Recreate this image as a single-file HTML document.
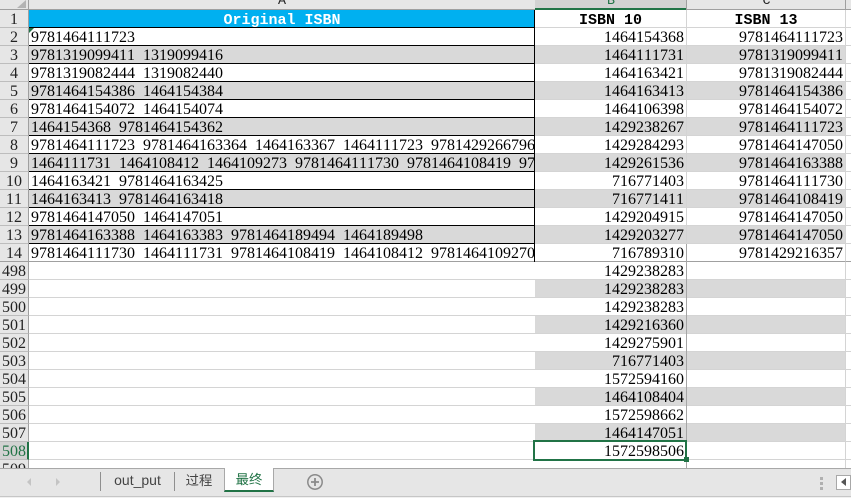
<!DOCTYPE html>
<html><head><meta charset="utf-8">
<style>
html,body{margin:0;padding:0;background:#fff;}
#s{position:relative;width:851px;height:498px;overflow:hidden;background:#fff;font-family:"Liberation Serif","Noto Sans CJK SC",serif;font-size:16px;color:#000;font-kerning:none;font-feature-settings:"kern" 0;text-rendering:optimizeSpeed;}
#s div{position:absolute;box-sizing:border-box;}
.h{left:0;width:29px;height:18px;background:#e6e6e6;border-right:1px solid #9f9f9f;border-bottom:1px solid #bdbdbd;text-align:right;padding-right:2px;line-height:20px;color:#222;overflow:hidden;}
.h.c{text-align:center;padding-right:0;}
.a{left:29px;width:506px;height:18px;line-height:20px;padding-left:2px;white-space:pre;word-spacing:4px;overflow:hidden;border-bottom:1px solid #000;border-right:1px solid #000;}
.b{left:535px;width:152px;height:18px;line-height:20px;text-align:right;padding-right:2px;border-bottom:1px solid #d4d4d4;border-right:1px solid #d4d4d4;overflow:hidden;}
.cc{left:687px;width:159px;height:18px;line-height:20px;text-align:right;padding-right:2px;border-bottom:1px solid #d4d4d4;border-right:1px solid #d4d4d4;overflow:hidden;}
.e{left:29px;width:506px;height:18px;border-bottom:1px solid #d4d4d4;}
.x{left:846px;width:5px;height:18px;border-bottom:1px solid #d4d4d4;}
.g{background:#d9d9d9;}
.t{font-family:"Liberation Mono",monospace;font-size:15px;font-weight:bold;text-align:center;line-height:21px;}
.l{font-family:"Liberation Mono",monospace;font-size:13.33px;}
</style></head><body><div id="s">
<div style="left:0;top:0;width:851px;height:10px;background:#e6e6e6;border-bottom:1px solid #9f9f9f;"></div>
<div style="left:0;top:0;width:29px;height:10px;background:#e6e6e6;border-right:1px solid #9f9f9f;border-bottom:1px solid #9f9f9f;"></div>
<svg style="position:absolute;left:15px;top:0" width="12" height="9"><polygon points="11,0 11,8 2,8" fill="#b4b4b4"/></svg>
<div class="l" style="left:29px;top:-6px;width:506px;height:15px;line-height:15px;text-align:center;color:#222;">A</div>
<div style="left:535px;top:0;width:152px;height:10px;background:#d2d2d2;border-bottom:2px solid #217346;"></div>
<div class="l" style="left:535px;top:-6px;width:152px;height:15px;line-height:15px;text-align:center;color:#217346;">B</div>
<div class="l" style="left:687px;top:-6px;width:159px;height:15px;line-height:15px;text-align:center;color:#222;">C</div>
<div style="left:686px;top:0;width:1px;height:10px;background:#9f9f9f;"></div>
<div style="left:845px;top:0;width:1px;height:10px;background:#9f9f9f;"></div>

<div class="h c" style="top:10px;">1</div>
<div class="t" style="left:29px;top:10px;width:506px;height:18px;background:#00b0f0;border-bottom:1px solid #000;color:#fff;">Original ISBN</div>
<div class="b t" style="top:10px;padding:0;line-height:21px;">ISBN 10</div>
<div class="cc t" style="top:10px;padding:0;line-height:21px;">ISBN 13</div>
<div class="x" style="top:10px;"></div>

<div class="h c" style="top:28px;">2</div><div class="a" style="top:28px;">9781464111723</div><div class="b" style="top:28px;">1464154368</div><div class="cc" style="top:28px;">9781464111723</div><div class="x" style="top:28px;"></div>
<div class="h c" style="top:46px;">3</div><div class="a g" style="top:46px;">9781319099411 1319099416</div><div class="b g" style="top:46px;">1464111731</div><div class="cc g" style="top:46px;">9781319099411</div><div class="x" style="top:46px;"></div>
<div class="h c" style="top:64px;">4</div><div class="a" style="top:64px;">9781319082444 1319082440</div><div class="b" style="top:64px;">1464163421</div><div class="cc" style="top:64px;">9781319082444</div><div class="x" style="top:64px;"></div>
<div class="h c" style="top:82px;">5</div><div class="a g" style="top:82px;">9781464154386 1464154384</div><div class="b g" style="top:82px;">1464163413</div><div class="cc g" style="top:82px;">9781464154386</div><div class="x" style="top:82px;"></div>
<div class="h c" style="top:100px;">6</div><div class="a" style="top:100px;">9781464154072 1464154074</div><div class="b" style="top:100px;">1464106398</div><div class="cc" style="top:100px;">9781464154072</div><div class="x" style="top:100px;"></div>
<div class="h c" style="top:118px;">7</div><div class="a g" style="top:118px;">1464154368 9781464154362</div><div class="b g" style="top:118px;">1429238267</div><div class="cc g" style="top:118px;">9781464111723</div><div class="x" style="top:118px;"></div>
<div class="h c" style="top:136px;">8</div><div class="a" style="top:136px;">9781464111723 9781464163364 1464163367 1464111723 9781429266796</div><div class="b" style="top:136px;">1429284293</div><div class="cc" style="top:136px;">9781464147050</div><div class="x" style="top:136px;"></div>
<div class="h c" style="top:154px;">9</div><div class="a g" style="top:154px;">1464111731 1464108412 1464109273 9781464111730 9781464108419 9781464109270</div><div class="b g" style="top:154px;">1429261536</div><div class="cc g" style="top:154px;">9781464163388</div><div class="x" style="top:154px;"></div>
<div class="h c" style="top:172px;">10</div><div class="a" style="top:172px;">1464163421 9781464163425</div><div class="b" style="top:172px;">716771403</div><div class="cc" style="top:172px;">9781464111730</div><div class="x" style="top:172px;"></div>
<div class="h c" style="top:190px;">11</div><div class="a g" style="top:190px;">1464163413 9781464163418</div><div class="b g" style="top:190px;">716771411</div><div class="cc g" style="top:190px;">9781464108419</div><div class="x" style="top:190px;"></div>
<div class="h c" style="top:208px;">12</div><div class="a" style="top:208px;">9781464147050 1464147051</div><div class="b" style="top:208px;">1429204915</div><div class="cc" style="top:208px;">9781464147050</div><div class="x" style="top:208px;"></div>
<div class="h c" style="top:226px;">13</div><div class="a g" style="top:226px;">9781464163388 1464163383 9781464189494 1464189498</div><div class="b g" style="top:226px;">1429203277</div><div class="cc g" style="top:226px;">9781464147050</div><div class="x" style="top:226px;"></div>
<div class="h c" style="top:244px;border-bottom:1px solid #9f9f9f;">14</div><div class="a" style="top:244px;border-bottom:1px solid #a0a0a0;">9781464111730 1464111731 9781464108419 1464108412 9781464109270</div><div class="b" style="top:244px;border-bottom:1px solid #a0a0a0;">716789310</div><div class="cc" style="top:244px;border-bottom:1px solid #a0a0a0;">9781429216357</div><div class="x" style="top:244px;border-bottom:1px solid #a0a0a0;"></div>

<div class="h" style="top:262px;">498</div><div class="e" style="top:262px;"></div><div class="b" style="top:262px;">1429238283</div><div class="cc" style="top:262px;"></div><div class="x" style="top:262px;"></div>
<div class="h" style="top:280px;">499</div><div class="e" style="top:280px;"></div><div class="b g" style="top:280px;">1429238283</div><div class="cc g" style="top:280px;"></div><div class="x" style="top:280px;"></div>
<div class="h" style="top:298px;">500</div><div class="e" style="top:298px;"></div><div class="b" style="top:298px;">1429238283</div><div class="cc" style="top:298px;"></div><div class="x" style="top:298px;"></div>
<div class="h" style="top:316px;">501</div><div class="e" style="top:316px;"></div><div class="b g" style="top:316px;">1429216360</div><div class="cc g" style="top:316px;"></div><div class="x" style="top:316px;"></div>
<div class="h" style="top:334px;">502</div><div class="e" style="top:334px;"></div><div class="b" style="top:334px;">1429275901</div><div class="cc" style="top:334px;"></div><div class="x" style="top:334px;"></div>
<div class="h" style="top:352px;">503</div><div class="e" style="top:352px;"></div><div class="b g" style="top:352px;">716771403</div><div class="cc g" style="top:352px;"></div><div class="x" style="top:352px;"></div>
<div class="h" style="top:370px;">504</div><div class="e" style="top:370px;"></div><div class="b" style="top:370px;">1572594160</div><div class="cc" style="top:370px;"></div><div class="x" style="top:370px;"></div>
<div class="h" style="top:388px;">505</div><div class="e" style="top:388px;"></div><div class="b g" style="top:388px;">1464108404</div><div class="cc g" style="top:388px;"></div><div class="x" style="top:388px;"></div>
<div class="h" style="top:406px;">506</div><div class="e" style="top:406px;"></div><div class="b" style="top:406px;">1572598662</div><div class="cc" style="top:406px;"></div><div class="x" style="top:406px;"></div>
<div class="h" style="top:424px;">507</div><div class="e" style="top:424px;"></div><div class="b g" style="top:424px;">1464147051</div><div class="cc g" style="top:424px;"></div><div class="x" style="top:424px;"></div>
<div class="h" style="top:442px;background:#d2d2d2;color:#217346;border-right:2px solid #217346;padding-right:1px;">508</div><div class="e" style="top:442px;"></div><div class="b" style="top:442px;">1572598506</div><div class="cc" style="top:442px;"></div><div class="x" style="top:442px;"></div>
<div class="h" style="top:460px;">509</div><div class="e" style="top:460px;"></div><div class="b" style="top:460px;"></div><div class="cc" style="top:460px;"></div>

<div style="left:686px;top:244px;width:1px;height:224px;background:#a6a6a6;"></div>
<div style="left:533px;top:440px;width:154px;height:21px;border:2px solid #217346;"></div>
<div style="left:684px;top:457px;width:5px;height:5px;background:#217346;"></div>
<div style="left:534px;top:10px;width:1px;height:252px;background:#000;"></div>
<svg style="position:absolute;left:29px;top:28px" width="6" height="6"><polygon points="0,0 5,0 0,5" fill="#217346"/></svg>

<div style="left:0;top:468px;width:851px;height:30px;background:#e6e6e6;border-top:1px solid #a8a8a8;"></div>
<div style="left:0;top:496px;width:851px;height:1px;background:#c6c6c6;"></div>
<div style="left:0;top:497px;width:851px;height:1px;background:#f0f0f0;"></div>
<svg style="position:absolute;left:23px;top:476px" width="40" height="12"><polygon points="8,2 8,10 4,6" fill="#c4c4c4"/><polygon points="33,2 33,10 37,6" fill="#c4c4c4"/></svg>
<div style="left:100px;top:472px;width:1px;height:19px;background:#8f8f8f;"></div>
<div style="left:174px;top:472px;width:1px;height:19px;background:#8f8f8f;"></div>
<div style="left:101px;top:470px;width:73px;height:22px;line-height:21px;text-align:center;font-family:'Liberation Sans',sans-serif;font-size:14px;color:#444;">out_put</div>
<div style="left:175px;top:470px;width:48px;height:22px;line-height:21px;text-align:center;font-family:'Liberation Sans','Noto Sans CJK SC',sans-serif;font-size:13.33px;color:#444;">过程</div>
<div style="left:224px;top:468px;width:50px;height:24px;background:#fff;border-left:1px solid #a8a8a8;border-right:1px solid #a8a8a8;border-bottom:2px solid #217346;line-height:24px;text-align:center;font-family:'Liberation Sans','Noto Sans CJK SC',sans-serif;font-size:13.33px;color:#217346;">最终</div>
<svg style="position:absolute;left:306px;top:473px" width="18" height="18"><circle cx="9" cy="9" r="7.2" fill="none" stroke="#8a8a8a" stroke-width="1.5"/><path d="M5 9H13M9 5V13" stroke="#8a8a8a" stroke-width="1.8"/></svg>
<div style="left:820px;top:477px;width:3px;height:3px;background:#b0b0b0;"></div>
<div style="left:820px;top:482px;width:3px;height:3px;background:#b0b0b0;"></div>
<div style="left:820px;top:487px;width:3px;height:3px;background:#b0b0b0;"></div>
<div style="left:836px;top:475px;width:15px;height:15px;background:#fff;border:1px solid #a8a8a8;"></div>
<svg style="position:absolute;left:839px;top:477px" width="10" height="10"><polygon points="7,1 7,9 2,5" fill="#555"/></svg>
</div></body></html>
